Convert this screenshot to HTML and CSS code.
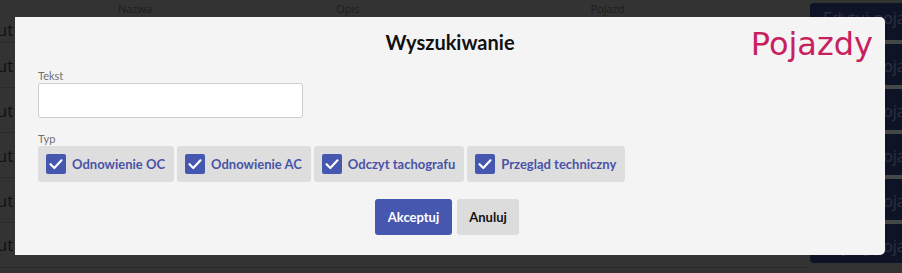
FILE: index.html
```html
<!DOCTYPE html>
<html lang="pl">
<head>
<meta charset="utf-8">
<title>Wyszukiwanie</title>
<link rel="stylesheet" href="styles.css">
</head>
<body>
<div class="page">
  <div class="table">
    <div class="thead">
      <span class="th th-name">Nazwa</span>
      <span class="th th-desc">Opis</span>
      <span class="th th-veh">Pojazd</span>
    </div>
    <div class="row row-first"><span class="date">Lut 1</span></div>
    <div class="row"><span class="date">Lut 2</span></div>
    <div class="row"><span class="date">Lut 2021</span></div>
    <div class="row"><span class="date">Lut 2021</span></div>
    <div class="row"><span class="date">Lut 2021</span></div>
    <div class="row row-last"><span class="date">Lut 2021</span><span class="mark"></span><span class="rtext">Odnowienie OC</span><span class="dots">.. .. .. ..</span></div>
  </div>
  <div class="side">
    <div class="sbtn">Edytuj pojazdu</div>
    <div class="sbtn">Edytuj pojazdu</div>
    <div class="sbtn">Edytuj pojazdu</div>
    <div class="sbtn">Edytuj pojazdu</div>
    <div class="sbtn">Edytuj pojazdu</div>
    <div class="sbtn">Edytuj pojazdu</div>
  </div>
</div>

<div class="modal">
  <h2 class="title">Wyszukiwanie</h2>
  <label class="label">Tekst</label>
  <input class="input" type="text">
  <div class="label label-typ">Typ</div>
  <div class="chips">
    <label class="chip"><span class="box"><svg viewBox="0 0 20 20" width="20" height="20"><path d="M4.5 10.2 L8.3 14 L15.5 6.3" fill="none" stroke="#fff" stroke-width="2.2" stroke-linecap="round" stroke-linejoin="round"/></svg></span>Odnowienie OC</label>
    <label class="chip"><span class="box"><svg viewBox="0 0 20 20" width="20" height="20"><path d="M4.5 10.2 L8.3 14 L15.5 6.3" fill="none" stroke="#fff" stroke-width="2.2" stroke-linecap="round" stroke-linejoin="round"/></svg></span>Odnowienie AC</label>
    <label class="chip"><span class="box"><svg viewBox="0 0 20 20" width="20" height="20"><path d="M4.5 10.2 L8.3 14 L15.5 6.3" fill="none" stroke="#fff" stroke-width="2.2" stroke-linecap="round" stroke-linejoin="round"/></svg></span>Odczyt tachografu</label>
    <label class="chip"><span class="box"><svg viewBox="0 0 20 20" width="20" height="20"><path d="M4.5 10.2 L8.3 14 L15.5 6.3" fill="none" stroke="#fff" stroke-width="2.2" stroke-linecap="round" stroke-linejoin="round"/></svg></span>Przegląd techniczny</label>
  </div>
  <div class="actions">
    <button class="btn btn-primary">Akceptuj</button>
    <button class="btn btn-secondary">Anuluj</button>
  </div>
</div>

<div class="brand">Pojazdy</div>
</body>
</html>
```

FILE: styles.css
```css
html, body {
  margin: 0;
  padding: 0;
  width: 902px;
  height: 273px;
  overflow: hidden;
  background: #333333;
  font-family: "Open Sans", "Noto Sans", sans-serif;
}

.page {
  display: flex;
  width: 902px;
  height: 273px;
}

.table {
  flex: 1;
  display: flex;
  flex-direction: column;
}

.thead {
  height: 17px;
  display: flex;
  align-items: center;
  font-size: 11px;
  color: #1e1e1e;
}
.th-name { margin-left: 118px; }
.th-desc { margin-left: 184px; }
.th-veh { margin-left: 231px; }

.row {
  height: 44px;
  border-bottom: 1px solid #2b2b2b;
  display: flex;
  align-items: center;
  font-size: 17px;
  color: #111;
}
.row-first { height: 25px; }
.date { margin-left: -12px; }
.row-last { align-items: flex-start; padding-top: 10px; height: 34px; }
.mark {
  width: 10px;
  height: 12px;
  background: #3a1414;
  margin-left: 50px;
  margin-top: 6px;
}
.rtext { margin-left: 8px; color: #141414; }
.dots { margin-left: 165px; color: #111; letter-spacing: 2px; }

.side {
  width: 92px;
  display: flex;
  flex-direction: column;
  gap: 4px;
  padding-top: 3px;
  background: linear-gradient(#333 0 3px, #464646 3px 263px, #333 263px);
  height: 260px;
}
.sbtn {
  height: 37px;
  background: #0f1326;
  border-radius: 3px 0 0 3px;
  color: #2e3140;
  font-size: 16px;
  padding-left: 13px;
  line-height: 31px;
  white-space: nowrap;
  overflow: hidden;
}
.sbtn:nth-child(2), .sbtn:nth-child(3), .sbtn:nth-child(4), .sbtn:nth-child(5) { height: 41px; line-height: 44px; }
.sbtn:last-child { height: 39px; line-height: 44px; }

.modal {
  position: absolute;
  left: 15px;
  top: 17px;
  width: 870px;
  height: 238px;
  box-sizing: border-box;
  background: #f4f4f4;
  border-radius: 0 5px 5px 0;
  padding: 13px 23px 0;
  font-family: "Lato", "Open Sans", sans-serif;
  display: flex;
  flex-direction: column;
}

.title {
  margin: 0;
  font-size: 20px;
  line-height: 24px;
  font-weight: 700;
  color: #111;
  text-align: center;
}

.label {
  display: block;
  margin-top: 15px;
  font-size: 11px;
  line-height: 13px;
  color: #707070;
}
.label-typ { margin-top: 14px; }

.input {
  margin-top: 1px;
  width: 265px;
  height: 35px;
  box-sizing: border-box;
  background: #fff;
  border: 1px solid #cfcfcf;
  border-radius: 3px;
  outline: none;
}

.chips {
  display: flex;
  gap: 3px;
  margin-top: 1px;
}
.chip {
  display: flex;
  align-items: center;
  height: 36px;
  padding: 0 9px 0 8px;
  background: #dedede;
  border-radius: 3px;
  font-size: 13px;
  font-weight: 700;
  color: #4953a6;
}
.box {
  width: 20px;
  height: 20px;
  background: #4557ae;
  border-radius: 2px;
  margin-right: 6px;
  display: flex;
}

.actions {
  display: flex;
  justify-content: center;
  gap: 5px;
  margin-top: 17px;
  padding-right: 6px;
}
.btn {
  height: 36px;
  border: none;
  border-radius: 3px;
  font-family: "Lato", sans-serif;
  font-size: 13px;
  font-weight: 700;
  padding: 0 12px;
}
.btn-primary {
  background: #4557ae;
  color: #fff;
  width: 77px;
}
.btn-secondary {
  background: #dcdcdc;
  color: #111;
  width: 62px;
}

.brand {
  position: absolute;
  right: 29px;
  top: 22px;
  font-family: "DejaVu Sans", sans-serif;
  font-size: 32px;
  line-height: 44px;
  color: #c81f5e;
}
```
